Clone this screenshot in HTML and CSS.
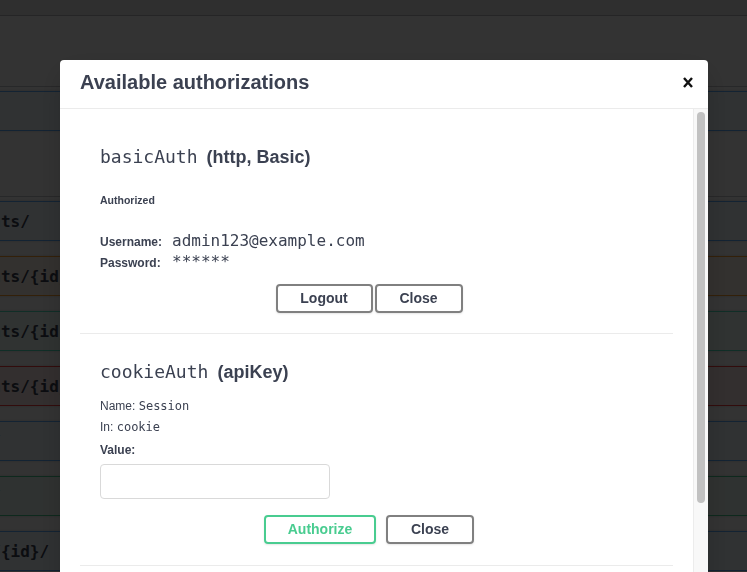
FILE: index.html
```html
<!DOCTYPE html>
<html lang="en">
<head>
<meta charset="utf-8">
<title>Swagger UI – Available authorizations</title>
<link rel="stylesheet" href="styles.css">
</head>
<body>
<div class="page">
  <div class="topbar"></div>
  <div class="tag tag-first"></div>
  <div class="ops">
    <div class="op op-get"><span class="path">/api/auth/</span></div>
  </div>
  <div class="tag tag-second"></div>
  <div class="ops">
    <div class="op op-get"><span class="path">/api/accounts/</span></div>
    <div class="op op-put"><span class="path">/api/accounts/{id}/</span></div>
    <div class="op op-patch"><span class="path">/api/accounts/{id}/</span></div>
    <div class="op op-delete"><span class="path">/api/accounts/{id}/</span></div>
    <div class="op op-get"><span class="path">/api/users/</span></div>
    <div class="op op-post"><span class="path">/api/users/</span></div>
    <div class="op op-get"><span class="path">/api/users/{id}/</span></div>
  </div>
</div>

<div class="backdrop"></div>

<div class="modal" role="dialog" aria-label="Available authorizations">
  <div class="modal-header">
    <h3 class="modal-title">Available authorizations</h3>
    <button class="close-modal" aria-label="Close">
      <svg width="10" height="11" viewBox="0 0 10 11" aria-hidden="true">
        <path d="M1 1 L9 10 M9 1 L1 10" stroke="#111" stroke-width="2.4" fill="none"/>
      </svg>
    </button>
  </div>
  <div class="modal-body">
    <div class="modal-content">
      <div class="auth auth-first">
        <h4><code>basicAuth</code> <span class="type">(http, Basic)</span></h4>
        <h6 class="status">Authorized</h6>
        <div class="cred">
          <div class="cred-row"><label>Username:</label><code>admin123@example.com</code></div>
          <div class="cred-row"><label>Password:</label><code>******</code></div>
        </div>
        <div class="btn-row btn-row-first">
          <button class="btn btn-logout">Logout</button>
          <button class="btn btn-close">Close</button>
        </div>
      </div>
      <div class="auth auth-second">
        <h4><code>cookieAuth</code> <span class="type">(apiKey)</span></h4>
        <div class="meta meta-first">Name: <code>Session</code></div>
        <div class="meta">In: <code>cookie</code></div>
        <label class="value-label" for="cookie-value">Value:</label>
        <input id="cookie-value" class="value-input" type="text">
        <div class="btn-row btn-row-second">
          <button class="btn btn-authorize">Authorize</button>
          <button class="btn btn-close">Close</button>
        </div>
      </div>
    </div>
    <div class="scroll-track"><div class="scroll-thumb"></div></div>
  </div>
</div>
</body>
</html>
```

FILE: styles.css
```css
html, body {
  margin: 0;
  padding: 0;
  overflow: hidden;
  height: 100%;
}

body {
  background: #fff;
  font-family: "Liberation Sans", Arial, sans-serif;
  color: #3b4151;
}

/* ---------- background swagger page ---------- */
.page {
  width: 100%;
}

.topbar {
  height: 15px;
  background: #ececec;
  border-bottom: 1px solid rgba(59, 65, 81, 0.3);
}

.tag {
  border-bottom: 1px solid rgba(59, 65, 81, 0.3);
}

.tag-first {
  height: 70px;
}

.tag-second {
  height: 50px;
}

.ops {
  padding-top: 4px;
}

.op {
  display: flex;
  align-items: center;
  height: 38px;
  margin: 0 -2px 15px;
  border: 1px solid #61affe;
  background: rgba(97, 175, 254, 0.1);
  box-shadow: 0 0 3px rgba(0, 0, 0, 0.19);
  overflow: hidden;
}

.op-put {
  border-color: #fca130;
  background: rgba(252, 161, 48, 0.1);
}

.op-patch {
  border-color: #50e3c2;
  background: rgba(80, 227, 194, 0.1);
}

.op-post {
  border-color: #49cc90;
  background: rgba(73, 204, 144, 0.1);
}

.op-delete {
  border-color: #f93e3e;
  background: rgba(249, 62, 62, 0.1);
}

.path {
  margin-left: -104px;
  font-family: "DejaVu Sans Mono", monospace;
  font-size: 16px;
  font-weight: bold;
  white-space: nowrap;
  color: #3b4151;
}

/* ---------- modal ---------- */
.backdrop {
  position: fixed;
  inset: 0;
  background: rgba(0, 0, 0, 0.8);
}

.modal {
  position: fixed;
  top: 60px;
  left: 60px;
  width: 648px;
  background: #fff;
  border-radius: 4px;
  box-shadow: 0 10px 30px -2px rgba(0, 0, 0, 0.2);
  overflow: hidden;
}

.modal-header {
  display: flex;
  align-items: center;
  justify-content: space-between;
  height: 44px;
  padding: 0 15px 4px 20px;
  border-bottom: 1px solid #ebebeb;
}

.modal-title {
  margin: 0;
  font-size: 20px;
  line-height: 24px;
  font-weight: bold;
  color: #3b4151;
}

.close-modal {
  display: flex;
  padding: 0;
  border: none;
  background: none;
  width: 10px;
  height: 11px;
}

.modal-body {
  display: flex;
  height: 520px;
  overflow: hidden;
}

.modal-content {
  flex: 1;
  min-width: 0;
  padding: 20px 20px 0;
}

.scroll-track {
  width: 15px;
  box-sizing: border-box;
  border-left: 1px solid #ececec;
  background: #f8f8f8;
  padding: 3px 0 0 3px;
}

.scroll-thumb {
  width: 8px;
  height: 391px;
  border-radius: 4px;
  background: #c1c1c1;
}

/* ---------- auth sections ---------- */
.auth {
  padding: 16px 20px 0;
  border-bottom: 1px solid #ebebeb;
}

.auth-second {
  padding-top: 26px;
}

.auth h4 {
  margin: 0;
  font-size: 18px;
  line-height: 24px;
  font-weight: bold;
  color: #3b4151;
}

.auth h4 code {
  font-family: "DejaVu Sans Mono", monospace;
  font-size: 18px;
  font-weight: normal;
}

.type {
  margin-left: 4px;
}

.status {
  margin: 24px 0 0;
  font-size: 10.5px;
  line-height: 14px;
  font-weight: bold;
}

.cred {
  margin-top: 25px;
}

.cred-row {
  font-size: 12px;
  line-height: 21px;
  font-weight: bold;
}

.cred-row label {
  display: inline-block;
  width: 72px;
}

.cred-row code {
  font-family: "DejaVu Sans Mono", monospace;
  font-size: 16px;
  line-height: 18px;
  font-weight: normal;
}

.meta {
  font-size: 12px;
  line-height: 21px;
}

.meta-first {
  margin-top: 12px;
}

.meta code {
  font-family: "DejaVu Sans Mono", monospace;
  font-size: 12px;
}

.value-label {
  display: block;
  margin-top: 4px;
  font-size: 12px;
  line-height: 16px;
  font-weight: bold;
}

.value-input {
  display: block;
  margin: 6px 0 0;
  width: 230px;
  height: 35px;
  box-sizing: border-box;
  padding: 8px 10px;
  border: 1px solid #d9d9d9;
  border-radius: 4px;
  background: #fff;
  font-family: "Liberation Sans", Arial, sans-serif;
}

.btn-row {
  display: flex;
  justify-content: center;
  padding: 10px 15px 20px 0;
}

.btn-row-second {
  padding: 16px 15px 21px 0;
}

.btn {
  height: 29px;
  box-sizing: border-box;
  padding: 4px 0;
  border: 2px solid #808080;
  border-radius: 4px;
  background: transparent;
  box-shadow: 0 1px 2px rgba(0, 0, 0, 0.1);
  font-family: "Liberation Sans", Arial, sans-serif;
  font-size: 14px;
  line-height: 17px;
  font-weight: bold;
  color: #3b4151;
  text-align: center;
}

.btn-logout {
  width: 97px;
  margin-right: 2px;
}

.btn-close {
  width: 88px;
}

.btn-authorize {
  width: 112px;
  margin-right: 10px;
  border-color: #49cc90;
  color: #49cc90;
}
```
